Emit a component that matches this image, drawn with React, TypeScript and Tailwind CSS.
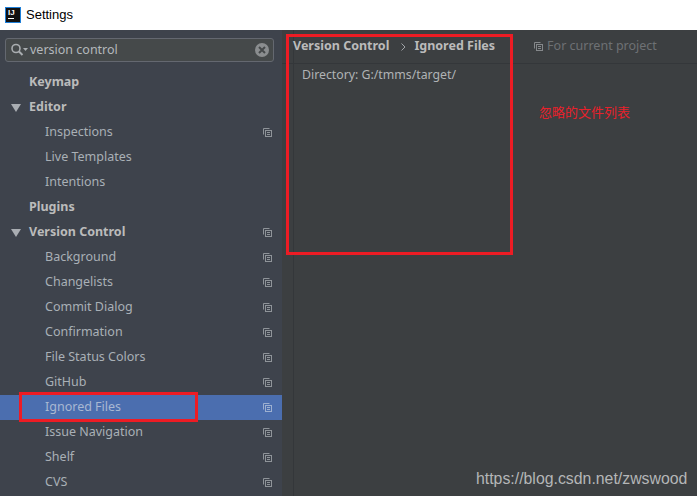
const bold = ['Keymap', 'Editor', 'Plugins', 'Version Control'];

type Row = { label: string; arrow?: boolean; copy?: boolean; selected?: boolean };

const rows: Row[] = [
  { label: 'Keymap' },
  { label: 'Editor', arrow: true },
  { label: 'Inspections', copy: true },
  { label: 'Live Templates' },
  { label: 'Intentions' },
  { label: 'Plugins' },
  { label: 'Version Control', arrow: true, copy: true },
  { label: 'Background', copy: true },
  { label: 'Changelists', copy: true },
  { label: 'Commit Dialog', copy: true },
  { label: 'Confirmation', copy: true },
  { label: 'File Status Colors', copy: true },
  { label: 'GitHub', copy: true },
  { label: 'Ignored Files', copy: true, selected: true },
  { label: 'Issue Navigation', copy: true },
  { label: 'Shelf', copy: true },
  { label: 'CVS', copy: true },
];

function CopyIcon({ className }: { className?: string }) {
  return (
    <svg width="9" height="9" viewBox="0 0 9 9" fill="none" stroke="currentColor" className={className}>
      <path d="M0.5 6.5V0.5H6.5" />
      <rect x="2.5" y="2.5" width="6" height="6" />
      <path d="M4 4.5H7M4 6.5H7" />
    </svg>
  );
}

function TreeRow({ row }: { row: Row }) {
  const isBold = bold.includes(row.label);
  return (
    <div className={`flex h-[25px] items-center pr-[10px] ${row.selected ? 'bg-[#4b6eaf]' : ''}`}>
      <div className="flex w-[29px] shrink-0 items-center pl-[11px]">
        {row.arrow && (
          <svg width="10" height="8" viewBox="0 0 10 8" className="text-[#a9adb2]">
            <path d="M0 0H10L5 8Z" fill="currentColor" />
          </svg>
        )}
      </div>
      <span
        className={`flex-1 text-[12.5px] ${
          isBold ? 'font-bold text-[#bbbbbb]' : `pl-[16px] ${row.selected ? 'text-[#a9b8d2]' : 'text-[#a9b0b6]'}`
        }`}
      >
        {row.label}
      </span>
      {row.copy && <CopyIcon className={`-mt-[1px] ${row.selected ? 'text-[#9db0d0]' : 'text-[#8f9499]'}`} />}
    </div>
  );
}

export default function App() {
  return (
    <div className="relative flex h-[496px] w-[697px] flex-col overflow-hidden bg-white font-['Noto_Sans','Liberation_Sans',sans-serif]">
      {/* window title */}
      <div className="flex h-[30px] shrink-0 items-center gap-[5px] pb-[1px] pl-[5px]">
        <div className="flex h-[16px] w-[16px] flex-col border border-[#1e7fd8] bg-[#111111] pl-[2px] font-['Liberation_Sans',sans-serif] text-[8px] font-bold leading-[9px] text-white">
          <span>IJ</span>
          <div className="mt-[1px] h-[1px] w-[6px] bg-white" />
        </div>
        <span className="font-['Liberation_Sans',sans-serif] text-[13px] text-black">Settings</span>
      </div>

      <div className="flex min-h-0 flex-1">
        {/* sidebar */}
        <div className="flex w-[282px] shrink-0 flex-col overflow-hidden bg-[#3e434c]">
          <div className="px-[5px] pb-[4px] pt-[8px]">
            <div className="flex h-[24px] w-[269px] items-center rounded-[3px] border border-[#646870] bg-[#45494a] pl-[4px] pr-[4px]">
              <svg width="20" height="14" viewBox="0 0 20 14" fill="none" className="shrink-0 text-[#a9adb0]">
                <circle cx="6" cy="5.5" r="4" stroke="currentColor" strokeWidth="1.6" />
                <path d="M9 8.5L12.5 12" stroke="currentColor" strokeWidth="2" />
                <path d="M13 5H18L15.5 8Z" fill="currentColor" />
              </svg>
              <span className="flex-1 text-[12.5px] text-[#b4b8bc]">version control</span>
              <div className="flex h-[14px] w-[14px] items-center justify-center rounded-full bg-[#8a8d8f]">
                <svg width="8" height="8" viewBox="0 0 8 8" stroke="#45494a" strokeWidth="2">
                  <path d="M1 1L7 7M7 1L1 7" />
                </svg>
              </div>
            </div>
          </div>
          <div className="pt-[4px]">
            {rows.map((row) => (
              <TreeRow key={row.label} row={row} />
            ))}
          </div>
        </div>

        {/* content */}
        <div className="flex min-w-0 flex-1 bg-[#3c3f41]">
          <div className="w-[12px] shrink-0 border-r border-[#34373a]" />
          <div className="flex min-w-0 flex-1 flex-col">
            <div className="-ml-[12px] flex h-[34px] shrink-0 items-center border-b border-[#34373a] pl-[11px] text-[12.5px]">
              <span className="font-bold text-[#bbbbbb]">Version Control</span>
              <span className="ml-[12px] mr-[8px] text-[#a0a4a8]">
                <svg width="5" height="8" viewBox="0 0 5 8" fill="none" stroke="currentColor">
                  <path d="M0.5 0.5L4 4L0.5 7.5" />
                </svg>
              </span>
              <span className="font-bold text-[#bbbbbb]">Ignored Files</span>
              <CopyIcon className="ml-[39px] text-[#85888b]" />
              <span className="ml-[4px] text-[#6e7174]">For current project</span>
            </div>
            <div className="pl-[8px] pt-[2px] text-[12.3px] text-[#b0b3b5]">Directory: G:/tmms/target/</div>
            <div className="pl-[245px] pt-[18px] font-['Noto_Sans_CJK_SC',sans-serif] text-[13px] text-[#e8212b]">
              忽略的文件列表
            </div>
          </div>
        </div>
      </div>

      {/* red annotation boxes over the screenshot */}
      <div className="absolute left-[286px] top-[34px] h-[221px] w-[227px] border-[3px] border-[#ed1c24]" />
      <div className="absolute left-[19px] top-[392px] h-[30px] w-[179px] border-[3px] border-[#ed1c24]" />

      {/* watermark */}
      <div className="absolute left-[476px] top-[467px] font-['Liberation_Sans',sans-serif] text-[15.85px] text-[#b4b6b7]">
        https://blog.csdn.net/zwswood
      </div>
    </div>
  );
}
